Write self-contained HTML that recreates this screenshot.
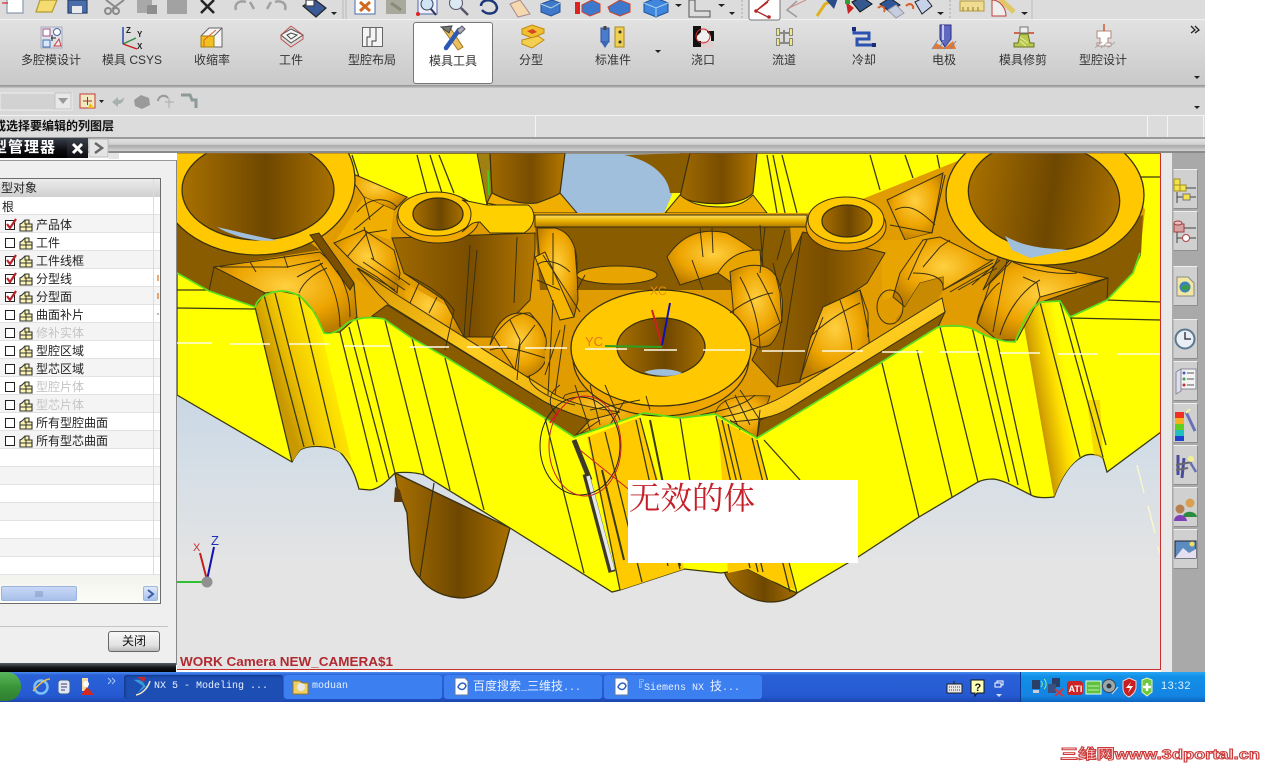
<!DOCTYPE html>
<html><head><meta charset="utf-8"><title>NX 5 Modeling</title>
<style>
html,body{margin:0;padding:0;background:#fff;width:1280px;height:768px;overflow:hidden}
body{position:relative;font-family:"Liberation Sans","Noto Sans CJK SC",sans-serif;font-size:12px;color:#222}
.a{position:absolute}
.l{position:absolute;top:52px;width:80px;text-align:center;font-size:12px;line-height:16px;color:#333;white-space:nowrap}
.r{position:absolute;left:0;width:160px;height:17px;border-bottom:1px solid #e2e2e2;background:#fff}
.r.g{background:#f4f4f4}
.t{position:absolute;left:36px;top:0;line-height:20px;font-size:12px;color:#222;white-space:nowrap}
.d{color:#c4c4c4}
.tb{position:absolute;top:675px;height:24px;border-radius:3px;background:#3c7ff0;color:#e8f0ff;font:10px/24px "Liberation Mono","Noto Sans CJK SC",monospace;white-space:nowrap;overflow:hidden}
.tb b{font-weight:normal;font-size:12px}
.sb{position:absolute;left:1173px;width:25px;background:#d0d0d0;border:1px solid #8e8e8e;border-left-color:#bbb;border-top-color:#eee;box-sizing:border-box}
</style></head><body>

<div class="a" style="left:0;top:0;width:1205px;height:20px;background:#dcdcdc;border-bottom:1px solid #f0f0f0;box-sizing:border-box"></div>
<div class="a" style="left:0;top:20px;width:1205px;height:65px;background:linear-gradient(#e2e2e2,#c9c9c9)"></div>
<div class="a" style="left:0;top:85px;width:1205px;height:3px;background:linear-gradient(#8f8f8f,#c8c8c8)"></div>
<div class="a" style="left:0;top:88px;width:1205px;height:28px;background:#d8d8d8;border-bottom:1px solid #f2f2f2;box-sizing:border-box"></div>
<div class="a" style="left:0;top:116px;width:1205px;height:21px;background:#dcdcdc"></div>
<div class="a" style="left:0;top:137px;width:1205px;height:2px;background:#9a9a9a"></div>
<div class="a" style="left:0;top:139px;width:1205px;height:12px;background:linear-gradient(#e2e2e2,#d0d0d0 45%,#aaa 55%,#d2d2d2)"></div>
<div class="a" style="left:0;top:151px;width:1205px;height:2px;background:#8a8a8a"></div>
<div class="a" style="left:535px;top:116px;width:1px;height:21px;background:#f4f4f4"></div>
<div class="a" style="left:1147px;top:116px;width:1px;height:21px;background:#f4f4f4"></div>
<div class="a" style="left:1167px;top:116px;width:1px;height:21px;background:#f4f4f4"></div>
<div class="a" style="left:1203px;top:116px;width:1px;height:21px;background:#f4f4f4"></div>

<div class="a" style="left:413px;top:22px;width:80px;height:62px;background:#fff;border:1px solid #777;border-radius:3px;box-sizing:border-box"></div>
<div class="l" style="left:11px">多腔模设计</div>
<div class="l" style="left:92px">模具 CSYS</div>
<div class="l" style="left:172px">收缩率</div>
<div class="l" style="left:251px">工件</div>
<div class="l" style="left:332px">型腔布局</div>
<div class="l" style="left:413px;top:53px">模具工具</div>
<div class="l" style="left:491px">分型</div>
<div class="l" style="left:573px">标准件</div>
<div class="l" style="left:663px">浇口</div>
<div class="l" style="left:744px">流道</div>
<div class="l" style="left:824px">冷却</div>
<div class="l" style="left:904px">电极</div>
<div class="l" style="left:983px">模具修剪</div>
<div class="l" style="left:1063px">型腔设计</div>

<div class="a" style="left:-6px;top:118px;font-size:12px;font-weight:bold;line-height:17px;color:#111;white-space:nowrap">或选择要编辑的列图层</div>

<!-- Toolbar and ribbon icons -->
<svg class="a" style="left:0;top:0" width="1205" height="116" viewBox="0 0 1205 116" fill="none">
<g stroke-width="1.2">
<path d="M7 0V13H23V0" fill="#fff" stroke="#8a9ab0"/><path d="M2 3H8" stroke="#d22"/>
<path d="M36 12L40 0H57L52 12Z" fill="#f4dc70" stroke="#b49a30"/>
<path d="M68 0H87V13H68Z" fill="#4a6ca8" stroke="#26406e"/><rect x="72" y="6" width="10" height="7" fill="#e8e8e8"/>
<path d="M106 0L118 9M124 0L112 9" stroke="#8a8a8a" stroke-width="2"/><circle cx="108" cy="11" r="3" stroke="#8a8a8a" stroke-width="2"/><circle cx="116" cy="11" r="3" stroke="#8a8a8a" stroke-width="2"/>
<rect x="137" y="0" width="15" height="13" fill="#a8a8a8"/><rect x="147" y="5" width="10" height="9" fill="#8e8e8e"/>
<rect x="167" y="0" width="20" height="14" fill="#a2a2a2"/>
<path d="M201 0L214 13M214 0L201 13" stroke="#222" stroke-width="2.5"/>
<path d="M236 10C234 3 240 0 246 2M254 9L250 2" stroke="#a0a0a0" stroke-width="2.5"/>
<path d="M285 10C287 3 281 0 275 2M267 9L271 2" stroke="#a0a0a0" stroke-width="2.5"/>
<path d="M303 6L314 -1L326 8L316 17Z" fill="#3a5a98" stroke="#222"/><path d="M306 0H314V6H306Z" fill="#fff" stroke="#444"/>
</g>
<path d="M331 12H337L334 15Z" fill="#222"/>
<path d="M343 0V19M346 0V19" stroke="#b8b8b8"/>
<g>
<rect x="355" y="-2" width="20" height="16" fill="#fff" stroke="#4a6aa8"/><path d="M360 2L370 11M370 2L360 11" stroke="#d06a20" stroke-width="3"/>
<rect x="386" y="-2" width="20" height="16" fill="#a8a89c"/><path d="M391 3L401 10" stroke="#8a8a78" stroke-width="3"/>
<rect x="418" y="-2" width="19" height="16" fill="#eef" stroke="#4a6aa8"/><circle cx="427" cy="4" r="6" stroke="#345" fill="#cfe4f4"/><path d="M431 9L436 15" stroke="#335" stroke-width="2"/><circle cx="418" cy="14" r="2" fill="#d22"/>
<circle cx="456" cy="3" r="6.5" stroke="#556" fill="#dce8f2"/><path d="M461 8L468 15" stroke="#556" stroke-width="2.5"/>
<path d="M481 6C481 -2 496 -2 497 8C496 15 486 15 482 10" stroke="#1c3878" stroke-width="2.5"/>
<path d="M510 4L520 0L530 14L518 17Z" fill="#f4d8b0" stroke="#a88"/>
<path d="M541 4L552 0L560 3V12L551 16L541 12Z" fill="#3d78cc" stroke="#26508f"/><path d="M541 4L551 8L560 3" stroke="#bdd"/>
<rect x="575" y="2" width="5" height="12" fill="#d22"/><path d="M582 5L592 0L600 4V12L590 16L582 12Z" fill="#3d78cc" stroke="#d0402c"/>
<path d="M608 7L620 0L630 4V12L620 16L610 12Z" fill="#3d78cc" stroke="#d0402c"/>
<path d="M644 3L656 -2L668 3V12L656 17L644 12Z" fill="#3f86dc" stroke="#1c4f98"/><path d="M644 3L656 8L668 3M656 8V17" stroke="#a8d0f4"/>
<path d="M675 4H682L678.500 7Z" fill="#222"/>
<path d="M689 0V17H710V11H695V0Z" fill="#dcdcdc" stroke="#555"/>
<path d="M718 4H725L721.500 7Z M729 12H735L732 15Z" fill="#222"/>
<path d="M742 0V19" stroke="#a8a8a8" stroke-dasharray="2 2"/>
<rect x="749" y="-3" width="31" height="23" rx="2" fill="#fff" stroke="#777"/><path d="M768 2L756 11L768 17M756 11L770 -1" stroke="#b02a2a" stroke-width="1.3"/><circle cx="756" cy="11" r="1.8" fill="#b22"/><circle cx="769" cy="17" r="1.8" fill="#b22"/>
<path d="M797 1L787 10L797 17" stroke="#9a9a9a" stroke-width="1.5"/><path d="M789 8L806 0" stroke="#d08a8a"/>
<path d="M817 16L825 4L835 0" stroke="#e0b020" stroke-width="3"/><path d="M826 0L838 -2L834 9Z" fill="#2a4a88"/>
<path d="M846 2L848 14L854 8Z" fill="#c82222"/><path d="M852 2L862 -3L872 4L860 12Z" fill="#35598f" stroke="#111"/><rect x="845" y="0" width="5" height="4" fill="#30a030"/>
<path d="M880 4L890 -2L900 5L890 12Z" fill="#2e5496" stroke="#222"/><path d="M888 10L896 5L904 13L896 18Z" fill="#c4cee0" stroke="#99a"/><path d="M878 8C882 4 886 8 884 12" stroke="#d8602c" stroke-width="2"/>
<path d="M906 6C910 2 914 5 913 9" stroke="#d8602c" stroke-width="2"/><path d="M915 2L925 -3L932 6L922 14Z" fill="#c6d2e8" stroke="#223"/>
<path d="M937 12H944L940.500 15Z" fill="#222"/>
<path d="M950 0V19" stroke="#a8a8a8" stroke-dasharray="2 2"/>
<rect x="960" y="1" width="24" height="10" fill="#f0dc90" stroke="#b49a40"/><path d="M963 7V11M968 7V11M973 7V11M978 7V11" stroke="#8a7630"/>
<path d="M992 0V16H1006C1006 8 1000 0 992 0Z" fill="#eee" stroke="#c04040"/><path d="M1000 -1L1014 12" stroke="#e0c868" stroke-width="5"/>
<path d="M1021 12H1028L1024.500 15Z" fill="#222"/>
<path d="M1032 0V19" stroke="#bbb"/>
</g>

<!-- ribbon -->
<g>
<rect x="41" y="27" width="21" height="21" fill="#dfe3e8" stroke="#aab" />
<rect x="43" y="29" width="7" height="7" fill="#fff" stroke="#a0508a"/><circle cx="57" cy="32" r="3.500" fill="#fff" stroke="#4a62a0"/>
<rect x="43" y="40" width="7" height="7" fill="#d8e8f8" stroke="#3a70b8"/><path d="M54 46L61 46L59 39Z" fill="#f8e8e8" stroke="#c04040"/>
<path d="M51 38H56M52 35V41" stroke="#222"/>
<path d="M123 44L136 38" stroke="#2c8c40" stroke-width="1.400"/><path d="M123 44V27" stroke="#2040a8" stroke-width="1.400"/><path d="M123 44L137 49" stroke="#c82020" stroke-width="1.400"/>
<text x="126" y="33" font-size="8" font-weight="bold" fill="#222">Z</text><text x="137" y="37" font-size="8" font-weight="bold" fill="#222">Y</text><text x="137" y="49" font-size="8" font-weight="bold" fill="#222">X</text>
<path d="M201 36L209 28H222V47H201Z" fill="#f6f6f6" stroke="#666"/><path d="M201 36H214V47H201Z" fill="#f0c020" stroke="#a08010"/><path d="M214 36L222 28" stroke="#666"/><path d="M204 47V40L216 30" stroke="#e06020"/>
<path d="M281 35L291 29L303 35L291 43Z" fill="#f4f4f4" stroke="#555"/><path d="M281 35V39L291 47L303 39V35M291 26L281 35M291 26L303 35" stroke="#c05050"/><path d="M287 35L291 33L297 35L291 39Z" stroke="#444"/>
<rect x="362.500" y="27.500" width="20" height="19" fill="#f4f4f4" stroke="#666"/>
<path d="M370 28V37H367V46M376 28V41H372V46" stroke="#444"/>
<!-- hammer -->
<path d="M443 29L449 26L463 47L458 50Z" fill="#e8c060" stroke="#a07820"/>
<path d="M441 27L452 26L449 33Z" fill="#777" stroke="#444"/>
<path d="M459 30L446 48" stroke="#2c58b4" stroke-width="4.500" stroke-linecap="round"/><path d="M457 30L462 26L465 29L460 34Z" fill="#aab" stroke="#556"/>
<!-- parting -->
<path d="M522 29L532 25L544 29V33L532 38L522 34Z" fill="#f0c030" stroke="#c08810"/><path d="M527 31L533 29L537 32L532 34Z" fill="#d84820"/>
<path d="M522 40L538 36L544 40L532 48L522 44Z" fill="#f4d050" stroke="#c08810"/>
<!-- standard parts -->
<rect x="601" y="28" width="8" height="14" fill="#4a7ccc" stroke="#2a4f98"/><path d="M601 42L605 48L609 42Z" fill="#3a66b4"/><path d="M605 26V30" stroke="#444" stroke-width="3"/>
<rect x="615" y="27" width="9" height="20" fill="#f0d050" stroke="#a88820"/><circle cx="620" cy="32" r="1.500" fill="#333"/><circle cx="620" cy="42" r="1.500" fill="#333"/>
<path d="M655 50L658 53L661 50Z" fill="#222"/>
<!-- gate -->
<rect x="693" y="26" width="21" height="21" fill="#111"/><path d="M701 26H707V32L711 36V41H697V36L701 32Z" fill="#f0f0f0"/><rect x="701" y="41" width="13" height="7" fill="#e0d0d0"/><rect x="701" y="26" width="13" height="5" fill="#ddd"/><circle cx="703" cy="36" r="7" stroke="#d02828"/>
<!-- runner -->
<rect x="776.500" y="28.500" width="3" height="7" fill="#f0e890" stroke="#887"/><rect x="789.500" y="28.500" width="3" height="7" fill="#f0e890" stroke="#887"/><rect x="776.500" y="38.500" width="3" height="7" fill="#f0e890" stroke="#887"/><rect x="789.500" y="38.500" width="3" height="7" fill="#f0e890" stroke="#887"/>
<path d="M779 33H790M784 30V43M779 43H790" stroke="#888" stroke-width="2"/>
<!-- cooling -->
<path d="M854 29V33H869V39H857V45H874" stroke="#2a52b0" stroke-width="3"/><rect x="852" y="27" width="4" height="4" fill="#182c78"/><rect x="872" y="43" width="4" height="4" fill="#182c78"/>
<!-- electrode -->
<path d="M940 25H951V39L945 47L940 39Z" fill="#6068c0" stroke="#2a2a80"/><path d="M943 25V40" stroke="#c0c8f0" stroke-width="2"/>
<path d="M932 49H956L953 41L945 48L936 43Z" fill="#e87830"/><path d="M932 49L938 40M938 49L944 41M944 49L950 41M950 49L956 41" stroke="#7888a8"/>
<!-- trim -->
<path d="M1014 33H1034" stroke="#c84020" stroke-width="1.500"/><rect x="1020" y="27" width="8" height="6" fill="#eee" stroke="#777"/>
<path d="M1020 34H1028L1030 43H1034V47H1014V43H1018Z" fill="#b8c850" stroke="#6a7820"/><path d="M1020 37L1028 43M1020 41L1026 46" stroke="#e8f0a0"/>
<!-- cavity -->
<path d="M1097 31H1111V38H1108V43H1111V46H1097V43H1100V38H1097Z" fill="#fff" stroke="#b08878"/><path d="M1104 24V31" stroke="#d05a30" stroke-width="1.500"/><path d="M1095 48L1102 42M1101 48L1108 42M1108 48L1115 42" stroke="#aaa"/>
<path d="M1191 26L1195 30L1191 33M1195 26L1199 30L1195 33" stroke="#222" stroke-width="1.300"/>
<path d="M1194 76H1200L1197 79Z" fill="#222"/>
</g>

<!-- second row -->
<rect x="0" y="93" width="72" height="17" fill="#d2d2d2" stroke="#eee"/>
<rect x="55" y="93" width="16" height="16" fill="#e8e8e8" stroke="#c4c4c4"/><path d="M58 98H68L63 104Z" fill="#999"/>
<rect x="80" y="94" width="15" height="14" fill="#f0e8c0" stroke="#c83a3a"/><path d="M83 101H92M87.500 97V105" stroke="#a03030"/><path d="M90 103L94 108L88 108Z" fill="#e8c020"/>
<path d="M99 100H104L101.500 103Z" fill="#222"/>
<path d="M112 102L118 107V104C122 104 124 101 124 97C122 100 120 100 118 100V97Z" fill="#a8b0b0"/>
<path d="M134 100L141 95L149 98L150 105L142 109L135 106Z" fill="#9a9a9a"/>
<path d="M158 101C158 96 165 94 168 98" stroke="#999" stroke-width="2"/><path d="M165 102H174M169 98V108" stroke="#aaa"/>
<path d="M181 95H190L192 100H196V108" stroke="#8e9a9a" stroke-width="3"/>
<path d="M1194 106H1200L1197 109Z" fill="#222"/>
</svg>

<!-- Model viewport -->
<svg class="a" style="left:177px;top:153px" width="984" height="517" viewBox="177 153 984 517">
<defs>
<linearGradient id="bg" x1="0" y1="0" x2="0" y2="1"><stop offset="0" stop-color="#9dbcdc"/><stop offset=".58" stop-color="#d3dde6"/><stop offset=".8" stop-color="#e4e4e4"/><stop offset="1" stop-color="#e4e4e4"/></linearGradient>
<linearGradient id="br" x1="0" y1="0" x2="1" y2="0"><stop offset="0" stop-color="#a87000"/><stop offset=".55" stop-color="#6e4700"/><stop offset="1" stop-color="#a87000"/></linearGradient>
<linearGradient id="br2" x1="0" y1="0" x2="1" y2="0"><stop offset="0" stop-color="#a06a00"/><stop offset=".55" stop-color="#784d00"/><stop offset="1" stop-color="#b47800"/></linearGradient>
<linearGradient id="col" gradientUnits="userSpaceOnUse" x1="262" y1="340" x2="330" y2="318"><stop offset="0" stop-color="#c89800"/><stop offset=".35" stop-color="#f2c800"/><stop offset=".75" stop-color="#ffe800"/><stop offset="1" stop-color="#ffff00"/></linearGradient>
<linearGradient id="col2" gradientUnits="userSpaceOnUse" x1="1028" y1="392" x2="1068" y2="385"><stop offset="0" stop-color="#a87c00"/><stop offset=".3" stop-color="#d8a800"/><stop offset=".7" stop-color="#ffe000"/><stop offset="1" stop-color="#ffff00"/></linearGradient>
<radialGradient id="sh" cx=".5" cy=".42" r=".62"><stop offset="0" stop-color="#ffd040"/><stop offset=".6" stop-color="#eda400"/><stop offset="1" stop-color="#b87a00"/></radialGradient>
<linearGradient id="rim" x1="0" y1="0" x2="1" y2="1"><stop offset="0" stop-color="#d89400"/><stop offset=".5" stop-color="#ffce20"/><stop offset="1" stop-color="#e0a000"/></linearGradient>
<linearGradient id="bar" x1="0" y1="0" x2="0" y2="1"><stop offset="0" stop-color="#ffe060"/><stop offset=".5" stop-color="#e8b000"/><stop offset="1" stop-color="#b07a00"/></linearGradient>
</defs>
<rect x="177" y="153" width="984" height="517" fill="url(#bg)"/>

<!-- rear cylinders below body -->
<path d="M395,473 L510,528 L497,577 C492,590 480,596 464,598 C445,598 428,590 420,578 C412,570 410,560 410,557 L407,513 L397,487Z" fill="url(#br)" stroke="#3a3010" stroke-width="1.300"/>
<path d="M395,487L394,502H403L400,490Z" fill="#5a3a10"/>
<path d="M434,483L420,577" stroke="#3a3010" stroke-width="1.200"/>
<path d="M724,570C728,588 750,602 771,602C782,602 792,598 797,593L750,565Z" fill="url(#br)" stroke="#3a3010" stroke-width="1.300"/>

<!-- yellow body -->
<path d="M177,153L1161,153V432L1107,472L1103,458C1098,454 1088,453 1082,457C1072,462 1062,475 1054,497C1045,498 1038,498 1033,496C1020,490 1005,480 993,479C985,479 980,481 978,482L919,517L858,557L797,593L790,590L748,569L721,573L684,569L620,590L612,592L510,528L424,475C415,472 403,472 395,473C388,480 380,489 370,490L359,489C356,478 352,465 340,452C330,446 310,444 300,450C296,455 293,460 292,462L177,395Z" fill="#ffff00" stroke="#3a3a10" stroke-width="1.300"/>

<!-- orange faces -->
<path d="M587,437L640,417L684,569L620,590Z" fill="#ffca00"/>
<path d="M718,418L757,440L795,590L770,580L748,569L728,573Z" fill="#ffca00"/>

<!-- columns -->
<path d="M255,307L265,293C272,290 290,290 299,295C310,305 316,315 320,325L352,463C346,455 340,452 332,448C320,444 305,446 300,450L292,462Z" fill="url(#col)"/>
<path d="M1023,320C1028,312 1034,304 1042,302L1060,301L1070,318L1082,456C1070,464 1062,476 1054,497Z" fill="url(#col2)"/>
<path d="M1087,400L1100,400L1103,458L1094,455Z" fill="#f0c000" opacity=".6"/>

<!-- thin dark lines on yellow -->
<g stroke="#3a3a10" stroke-width="1.300" fill="none">
<path d="M255,307L292,462M264,295L304,447M275,293L314,445M299,297L335,448M340,332L377,482M349,327L389,478M357,320L395,473M385,320L424,475M412,338L450,490M445,358L484,510M545,418L584,573"/>
<path d="M589,437L620,590M605,432L642,582M636,420L668,566M640,418L680,569M680,418L703,563M716,416L750,568M722,420L758,572M728,424L763,572M752,438L790,592M757,440L797,593M764,440L800,480"/>
<path d="M882,363L919,517M917,350L952,497M940,327L978,482M972,327L1009,482M982,330L1018,485M997,340L1031,495M1040,302L1080,457M1060,302L1103,457M1066,300L1106,445"/>
<path d="M352,155L359,177M417,155L427,193M430,155L442,193M439,155L454,193M767,155L777,213M773,155L785,213M782,155L797,213M870,155L880,190M905,155L913,178M937,155L940,170"/>
<path d="M1133,177H1161M1107,300L1161,302M1070,318L1161,320M177,290H209M177,308L255,309"/>
</g>
<path d="M574,440L590,480" stroke="#3e3a2a" stroke-width="5"/>
<path d="M586,474L612,572" stroke="#3e3a2a" stroke-width="7"/>
<path d="M588,476L613,570" stroke="#e4e8ee" stroke-width="3.500"/>
<path d="M602,470L624,560" stroke="#3a3a10" stroke-width="2"/>
<path d="M650,420L680,566" stroke="#3a3a10" stroke-width="2"/>

<!-- blue hole + rear pillars -->
<path d="M563,153H680L672,195L664,213H577L560,195Z" fill="#a0bfdc"/>
<path d="M477,153H490L492,193L487,205Z" fill="#a08010" stroke="#3a3010"/>
<path d="M488,170L489,195" stroke="#40d020" stroke-width="1.500"/>
<path d="M490,153L492,193C505,200 520,205 537,203C545,200 555,197 560,193L565,153Z" fill="url(#br2)" stroke="#3a3010" stroke-width="1.200"/>
<path d="M624,155C650,160 668,175 670,193L684,193L690,153Z" fill="#8a5c00"/>
<path d="M690,153L680,197C695,205 740,208 753,193L757,153Z" fill="url(#br2)" stroke="#3a3010" stroke-width="1.200"/>
<path d="M665,213L680,195C690,203 700,207 722,207C735,207 745,203 753,195L767,213Z" fill="#f0ae00" stroke="#3a3010"/>
<path d="M487,203L492,193C505,200 520,205 537,203C545,200 555,197 560,193L577,213H535Z" fill="#f0ae00" stroke="#3a3010"/>

<!-- pocket -->
<path d="M177,273L209,291L255,307L265,293L280,291L299,295L315,313L324,333L340,330L357,318L384,319L410,337L447,358L545,418L574,437L644,413L680,418L715,414L757,438L880,363L938,327L970,327L997,340L1015,342L1023,320L1042,302L1060,301L1070,317L1107,300L1133,273L1140,253L1145,210L1120,160H960L860,200L807,213H535L407,197L344,170L300,200L177,225Z" fill="#e09c00"/>
<path d="M535,225H790L795,290H540Z" fill="#8a5c00"/>
<path d="M177,225V273L209,291L214,267L320,250L300,235L177,205Z" fill="#8a5c00"/>
<path d="M1143,215L1141,255L1133,273L1107,300L1108,278L1013,260L1060,245Z" fill="#8a5c00"/>
<path d="M214,267L209,291L255,307L265,293L280,290L297,293Z" fill="#8a5c00" stroke="#3a3010"/>
<path d="M1108,278L1107,300L1070,317L1060,301L1042,302Z" fill="#8a5c00" stroke="#3a3010"/>

<!-- left fans -->
<path d="M214,267L320,252L354,283L357,317L340,332L324,333L315,313L299,295L280,291L265,293Z" fill="url(#sh)" stroke="#3a3010"/>
<path d="M354,277L390,303L372,316L357,317Z" fill="#e8a400"/>
<path d="M344,170L407,197L394,210L364,197L354,183Z" fill="url(#sh)" stroke="#3a3010"/>
<path d="M354,213L364,197L394,210L390,240L364,230L334,243Z" fill="#f0ae00"/>
<path d="M334,243L364,230L394,250L400,273L397,293L377,277L354,263Z" fill="url(#sh)" stroke="#3a3010"/>
<path d="M394,277L454,310L462,340L450,345L404,296Z" fill="url(#sh)"/>

<!-- right fans -->
<path d="M1013,260L1108,278L1040,297L1017,340L997,340L977,323L990,283Z" fill="url(#sh)" stroke="#3a3010"/>
<path d="M887,200L943,173L932,233L905,240Z" fill="url(#sh)" stroke="#3a3010"/>
<path d="M880,240L905,240L932,233L925,240L900,273L893,297L883,300Z" fill="#e8a400"/>
<path d="M900,273L923,240L940,237L987,260L993,260L943,290L943,277L920,283L905,307L893,297Z" fill="url(#sh)" stroke="#3a3010"/>
<path d="M905,307L920,283L943,277L943,290L935,305L908,325L895,320Z" fill="#c88a00"/>
<path d="M1000,253L1007,247L1010,260L983,290Z" fill="#a87000" stroke="#3a3010"/>

<!-- bosses bodies -->
<path d="M392,238L535,233V250L530,300L494,337L464,337L444,300L404,273Z" fill="url(#br2)" stroke="#3a3010"/>
<path d="M803,232L885,253L867,283L827,310L810,345L800,382L777,387L752,360L770,320L785,270Z" fill="url(#br2)" stroke="#3a3010"/>

<!-- central fillets -->
<path d="M490,345C495,325 505,313 520,313C540,315 548,335 547,355C545,370 530,378 520,378L494,337Z" fill="url(#sh)" stroke="#3a3010"/>
<path d="M537,228H555C572,232 578,250 577,270L578,300L574,317H560L540,262Z" fill="url(#sh)" stroke="#3a3010"/>
<path d="M535,257L560,320L574,317L545,252Z" fill="#f5b400" stroke="#3a3010"/>
<path d="M545,330L575,320L572,395L545,400Z" fill="#e09c00"/>
<ellipse cx="617" cy="275" rx="40" ry="9" fill="#e8a400" stroke="#3a3010"/>
<path d="M667,257C683,233 703,228 727,233C740,240 755,250 760,255L718,273L680,285Z" fill="url(#sh)" stroke="#3a3010"/>
<path d="M718,273C730,253 747,250 760,250L762,280L735,285Z" fill="#e8a400" stroke="#3a3010"/>
<path d="M730,272C750,262 770,262 778,280C785,300 785,330 770,345C755,352 745,340 735,330Z" fill="url(#sh)" stroke="#3a3010"/>
<path d="M823,307L860,290L868,330L870,350L800,380L810,340Z" fill="url(#sh)" stroke="#3a3010"/>

<!-- corner fillets at V -->
<path d="M565,395C590,385 630,395 645,413L600,428L575,435L555,412Z" fill="url(#sh)" stroke="#3a3010" stroke-width=".8"/>
<path d="M715,414C720,395 745,395 770,396L760,425L757,438Z" fill="url(#sh)" stroke="#3a3010" stroke-width=".8"/>

<!-- rims and walls -->
<path d="M387,305L545,402L590,420L574,437L545,418L447,358L410,337L384,319L372,316Z" fill="#8a5c00" stroke="#3a3010"/>
<path d="M760,420L790,408L945,312L938,327L880,363L757,438Z" fill="#8a5c00" stroke="#3a3010"/>
<path d="M357,268L394,293L551,392C565,402 590,408 620,412L590,420C575,415 560,410 545,402L389,305L378,294Z" fill="url(#rim)" stroke="#3a3010"/>
<path d="M722,417C740,414 770,405 787,394L942,298L945,312L790,408C770,420 750,420 730,422Z" fill="url(#rim)" stroke="#3a3010"/>
<path d="M535,215H807V227H535Z" fill="url(#bar)" stroke="#3a3010"/>

<!-- left ring -->
<ellipse cx="257" cy="180" rx="98" ry="75" fill="#ffc800" stroke="#3a3010" stroke-width="1.300"/>
<ellipse cx="258" cy="190" rx="76" ry="50" fill="url(#br)" stroke="#3a3010" stroke-width="1.300"/>
<path d="M217,227C240,232 262,238 277,240C262,243 235,238 217,227Z" fill="#a0bfdc"/>
<path d="M310,235L319,233L354,283L350,290Z" fill="#7a5000" stroke="#3a3010"/>

<!-- right ring -->
<ellipse cx="1045" cy="195" rx="99" ry="70" fill="#ffc800" stroke="#3a3010" stroke-width="1.300"/>
<ellipse cx="1044" cy="196" rx="76" ry="54" fill="url(#br)" stroke="#3a3010" stroke-width="1.300" transform="rotate(8 1044 196)"/>
<path d="M1005,236C1030,250 1055,248 1068,250L1030,258L1012,250Z" fill="#a0bfdc"/>

<!-- left boss -->
<ellipse cx="438" cy="218" rx="41" ry="25" fill="#f0a800" stroke="#3a3010"/>
<ellipse cx="436" cy="214" rx="38" ry="22" fill="#ffc800" stroke="#3a3010"/>
<ellipse cx="438" cy="214" rx="25" ry="16" fill="url(#br)" stroke="#3a3010" stroke-width="1.300"/>
<path d="M462,200L487,205H528C536,210 537,225 524,233H490L480,222C470,222 470,226 462,232C474,222 474,205 462,200Z" fill="#ffd000" stroke="#3a3010"/>

<!-- right boss -->
<ellipse cx="846" cy="226" rx="40" ry="25" fill="#f0a800" stroke="#3a3010"/>
<ellipse cx="846" cy="220" rx="38" ry="23" fill="#ffc800" stroke="#3a3010"/>
<ellipse cx="847" cy="221" rx="25" ry="16" fill="url(#br)" stroke="#3a3010" stroke-width="1.300"/>

<!-- central ring -->
<ellipse cx="661" cy="358" rx="88" ry="58" fill="#f0a800" stroke="#3a3010" stroke-width="1.200"/>
<ellipse cx="661" cy="348" rx="90" ry="58" fill="#ffc800" stroke="#3a3010" stroke-width="1.300"/>
<ellipse cx="661" cy="347" rx="44" ry="29" fill="url(#br)" stroke="#3a3010" stroke-width="1.300"/>
<path d="M644,372C655,377 675,377 682,373C672,368 655,368 644,372Z" fill="#a0bfdc"/>

<!-- mesh lines -->
<g stroke="#3a3010" stroke-width="1" fill="none">
<path d="M220,267H254L287,267L320,260M250,262L256,272M284,256L288,268M297,277L323,263M299,293C304,280 317,272 327,268M340,327C340,307 334,283 320,263M350,317C350,300 347,287 337,270M357,318L354,283"/>
<path d="M364,197L370,220M357,212C373,193 390,200 397,207M354,230L384,205M347,257L367,233L387,230M364,227L374,260M358,268L395,290M363,262L405,290M371,258L410,285"/>
<path d="M419,283L410,303M437,297L429,313M454,310L445,350M404,273C420,282 440,290 454,310"/>
<path d="M470,245L464,337M477,250L469,337M517,237L514,303"/>
<path d="M494,337C505,320 518,312 530,313M510,320L520,340L515,370M530,313C540,325 550,335 545,350M535,325L520,345L517,380M490,350C505,345 520,350 545,358M560,330L545,375M553,300L548,395M565,325L555,395"/>
<path d="M543,255L580,312M553,233V285M537,265C545,258 560,262 570,272M537,280L560,290M575,250L577,275M577,290L585,275"/>
<path d="M700,228L703,257M712,228L713,253M692,260L703,290M760,225L763,267M765,227L760,273"/>
<path d="M730,313C750,297 770,293 773,293M740,277C753,300 760,327 760,350M757,273C773,300 780,323 780,323M773,263L780,293L782,323M753,340L780,323M785,230L777,260"/>
<path d="M802,233L777,387M823,317L810,350L800,380M840,300C850,327 852,350 852,350M860,290L868,313V337M810,337C827,320 845,310 860,303"/>
<ellipse cx="890" cy="307" rx="13" ry="17"/>
<path d="M908,280L920,253L927,240M923,267L940,247L950,240M913,273C930,273 945,277 943,290M943,290L993,263M950,292L995,266M958,290L997,268M972,285L1000,260"/>
<path d="M977,323C980,300 997,283 1000,283M993,332C1000,293 1007,260 1007,260M1000,335C1013,293 1040,280 1040,280M1013,262C1047,277 1077,273 1077,273M1040,297L1037,283L1023,277"/>
<path d="M895,210C905,205 915,205 935,225M890,225L932,233M945,175L932,233"/>
<path d="M740,390L760,420M735,395L750,425M725,400L740,430M700,415C725,410 745,405 755,395M760,410L757,438M730,420L757,438"/>
<path d="M590,410L640,400M650,410L646,396M600,420L575,437M625,400L610,425M575,385L590,430M590,385L600,425M605,385L620,420"/>
<path d="M560,385C545,395 550,410 558,415M530,375C525,385 550,400 575,405"/>
</g>

<!-- green edge -->
<path d="M177,273L209,291L255,307C258,298 265,293 280,291C292,291 300,295 306,302C316,312 320,325 324,333C332,335 340,330 345,325C352,318 370,316 384,319L410,337L447,358L545,418L574,437L644,413L680,418L715,414L757,438L880,363L938,327C950,325 965,325 975,330C985,336 1000,342 1015,342C1022,325 1030,305 1042,302L1060,301L1070,317L1107,300L1133,273L1140,253" fill="none" stroke="#58e020" stroke-width="1.700"/>

<!-- dashed line -->
<path d="M177,343H212M230,344H270M289,344H329M344,346H390M409,347H449M467,347H507M525,348H567M585,349H627M644,350H677M703,350H745M762,351H805M822,351H863M882,352H923M940,352H980M1000,353H1040M1058,354H1098M1117,354H1160" stroke="#fffbe6" stroke-width="1.600" fill="none"/>
<path d="M1137,465L1144,493M1148,506L1155,533M1158,547L1160,553" stroke="#fff8c8" stroke-width="1.300" fill="none"/>

<!-- WCS at center -->
<path d="M605,346L662,347" stroke="#2ca020" stroke-width="2"/>
<path d="M652,310L662,345" stroke="#d02020" stroke-width="2"/>
<path d="M670,303L662,345" stroke="#1010b0" stroke-width="2"/>
<text x="585" y="346" font-family="Liberation Sans" font-size="13" fill="#e07820">YC</text>
<text x="650" y="295" font-family="Liberation Sans" font-size="12" fill="#e09010">XC</text>

<!-- annotation -->
<ellipse cx="580" cy="446" rx="40" ry="49" fill="none" stroke="#222" stroke-width="1"/>
<ellipse cx="585" cy="446" rx="36" ry="50" fill="none" stroke="#c82020" stroke-width="1"/>
<path d="M580,450L632,492" stroke="#d02020" stroke-width="1"/>
<path d="M550,423L559,410" stroke="#d02020" stroke-width="1.500"/>
<rect x="628" y="480" width="230" height="83" fill="#fff"/>
<text x="629" y="509" font-family="Liberation Serif,Noto Serif CJK SC,serif" font-size="31.500" fill="#c4202a">无效的体</text>

<!-- triad -->
<path d="M177,582H207" stroke="#30c030" stroke-width="2"/>
<path d="M200,553L207,580" stroke="#c02020" stroke-width="2"/>
<path d="M214,547L207,580" stroke="#1010b0" stroke-width="2"/>
<circle cx="207" cy="582" r="5.500" fill="#909090"/>
<text x="193" y="551" font-family="Liberation Sans" font-size="11" fill="#c83030">X</text>
<text x="211" y="545" font-family="Liberation Sans" font-size="13" fill="#2030b0">Z</text>

<text x="180" y="666" font-family="Liberation Sans" font-weight="bold" font-size="13" fill="#b02a30" textLength="213" lengthAdjust="spacingAndGlyphs">WORK Camera NEW_CAMERA$1</text>
<path d="M177,669.500H1160.500V153" fill="none" stroke="#c83030" stroke-width="1"/>
<path d="M177,153.500H1161" stroke="#9a6a30" stroke-width="1" opacity=".5"/>
</svg>

<!-- Right column -->
<div class="a" style="left:1161px;top:153px;width:11px;height:519px;background:#e8e8e8"></div>
<div class="a" style="left:1172px;top:153px;width:33px;height:519px;background:#a9a9a9"></div>
<div class="sb" style="top:169px;height:40px"></div>
<div class="sb" style="top:211px;height:40px"></div>
<div class="sb" style="top:266px;height:40px"></div>
<div class="sb" style="top:319px;height:40px"></div>
<div class="sb" style="top:361px;height:40px"></div>
<div class="sb" style="top:403px;height:40px"></div>
<div class="sb" style="top:445px;height:40px"></div>
<div class="sb" style="top:487px;height:40px"></div>
<div class="sb" style="top:529px;height:40px"></div>
<svg class="a" style="left:1172px;top:153px" width="33" height="420" viewBox="1172 153 33 420" fill="none">
<rect x="1174" y="179" width="6" height="6" fill="#f4e24a" stroke="#a09020"/><rect x="1180" y="185" width="6" height="6" fill="#f4e24a" stroke="#a09020"/><rect x="1174" y="185" width="6" height="6" fill="#f4e24a" stroke="#a09020"/>
<path d="M1186 188H1196M1177 192V203M1177 197H1183M1190 197H1196" stroke="#444"/><rect x="1183" y="194" width="7" height="6" fill="#f4e24a" stroke="#777"/>
<path d="M1174 224H1184V232H1174Z" fill="#d8a0a0" stroke="#a04040"/><ellipse cx="1178" cy="223" rx="4" ry="2" fill="#e8c0c0" stroke="#a04040"/>
<path d="M1184 228H1196M1177 232V243M1177 238H1183M1190 238H1196" stroke="#444"/><circle cx="1186" cy="238" r="3.500" fill="#fff" stroke="#b04040"/>
<path d="M1177 277H1188L1194 283V296H1177Z" fill="#f2e6a4" stroke="#8a8a80"/><circle cx="1185" cy="287" r="5.500" fill="#3d82b8"/><path d="M1181 288C1183 284 1187 284 1190 287C1188 291 1184 292 1181 288Z" fill="#3c9a4c"/>
<circle cx="1185" cy="339" r="9.500" fill="#e8eef4" stroke="#5a7890" stroke-width="2"/><path d="M1185 332V339H1191" stroke="#223" stroke-width="1.300"/>
<path d="M1176 372L1181 369V391L1176 394Z" fill="#dde" stroke="#889"/><rect x="1181" y="369" width="15" height="20" fill="#f4f4f4" stroke="#889"/>
<circle cx="1184" cy="373" r="1.500" fill="#4060b0"/><circle cx="1184" cy="379" r="1.500" fill="#40a050"/><circle cx="1184" cy="385" r="1.500" fill="#c03030"/><path d="M1187 373H1194M1187 379H1194M1187 385H1194" stroke="#555"/>
<rect x="1175" y="412" width="9" height="6" fill="#f03020"/><rect x="1175" y="418" width="9" height="6" fill="#f8b020"/><rect x="1175" y="424" width="9" height="6" fill="#60d020"/><rect x="1175" y="430" width="9" height="6" fill="#20c0c0"/><rect x="1175" y="436" width="9" height="5" fill="#2040d0"/>
<path d="M1186 412L1195 431" stroke="#6a70b8" stroke-width="3"/><path d="M1186 413L1190 409" stroke="#f4f0a0" stroke-width="2"/>
<path d="M1178 455L1178 475M1184 458L1182 478" stroke="#4a4ca0" stroke-width="3"/><path d="M1176 465L1192 462M1176 470L1188 468" stroke="#6a6a6a" stroke-width="2"/><path d="M1190 462L1196 472" stroke="#6a70b8" stroke-width="2.500"/><circle cx="1191" cy="459" r="3" fill="#f0f090"/>
<circle cx="1190" cy="503" r="4.500" fill="#d8a050"/><path d="M1183 517C1183 510 1196 510 1197 517Z" fill="#2a8a40"/>
<circle cx="1180" cy="509" r="4.500" fill="#b88050"/><path d="M1174 521C1174 513 1186 513 1187 521Z" fill="#8040b8"/>
<rect x="1175" y="541" width="21" height="17" fill="#5a8cc0" stroke="#223"/><path d="M1175 558L1183 548L1189 553L1196 549V558Z" fill="#e4e0f0"/><circle cx="1192" cy="544" r="2.500" fill="#f0e060"/>
</svg>

<!-- Left panel -->
<div class="a" style="left:0;top:160px;width:176px;height:504px;background:#efefef;border-right:1px solid #888;border-top:1px solid #999;box-sizing:content-box"></div>
<div class="a" style="left:0;top:138px;width:67px;height:20px;background:linear-gradient(#39404a,#0c0c10 60%,#000);color:#fff;font-weight:bold;font-size:15px;line-height:19px;letter-spacing:1px;white-space:nowrap;overflow:hidden"><span style="margin-left:-8px">型管理器</span></div>
<div class="a" style="left:67px;top:138px;width:21px;height:20px;background:linear-gradient(#39404a,#0c0c10)"></div>
<svg class="a" style="left:67px;top:138px" width="42" height="20" fill="none"><path d="M6 6L15 15M15 6L6 15" stroke="#fff" stroke-width="3"/><rect x="22" y="1" width="19" height="18" fill="#e4e4e4" stroke="#bbb"/><path d="M28 5L35 10L28 15" stroke="#666" stroke-width="2.500"/></svg>
<div class="a" style="left:109px;top:153px;width:10px;height:6px;background:#e4e4e4"></div>

<div class="a" style="left:0;top:178px;width:160px;height:424px;background:#fff;border:1px solid #6c6c6c;border-left:0;overflow:hidden;box-sizing:content-box">
<div class="a" style="left:0;top:0;width:160px;height:18px;background:linear-gradient(#ececec,#cfcfcf);font-size:12px;line-height:18px;color:#222;white-space:nowrap;padding-left:1px;box-sizing:border-box">型对象</div>
<div class="r" style="top:18px"><span class="t" style="left:2px">根</span></div>
<div class="r g" style="top:36px"><span class="t">产品体</span></div>
<div class="r" style="top:54px"><span class="t">工件</span></div>
<div class="r g" style="top:72px"><span class="t">工件线框</span></div>
<div class="r" style="top:90px"><span class="t">分型线</span></div>
<div class="r g" style="top:108px"><span class="t">分型面</span></div>
<div class="r" style="top:126px"><span class="t">曲面补片</span></div>
<div class="r g" style="top:144px"><span class="t d">修补实体</span></div>
<div class="r" style="top:162px"><span class="t">型腔区域</span></div>
<div class="r g" style="top:180px"><span class="t">型芯区域</span></div>
<div class="r" style="top:198px"><span class="t d">型腔片体</span></div>
<div class="r g" style="top:216px"><span class="t d">型芯片体</span></div>
<div class="r" style="top:234px"><span class="t">所有型腔曲面</span></div>
<div class="r g" style="top:252px"><span class="t">所有型芯曲面</span></div>
<div class="r" style="top:270px"></div>
<div class="r g" style="top:288px"></div>
<div class="r" style="top:306px"></div>
<div class="r g" style="top:324px"></div>
<div class="r" style="top:342px"></div>
<div class="r g" style="top:360px"></div>
<div class="r" style="top:378px"></div>
<div class="a" style="left:153px;top:0;width:1px;height:396px;background:#dcdcdc"></div>
<div class="a" style="left:0;top:396px;width:160px;height:28px;background:linear-gradient(#f2f2ee,#fdfdf8)"></div>
<div class="a" style="left:1px;top:407px;width:76px;height:15px;background:linear-gradient(#c8d8f6,#a8c0ea);border:1px solid #9cb4dc;border-radius:2px;box-sizing:border-box"></div>
<div class="a" style="left:143px;top:407px;width:15px;height:15px;background:linear-gradient(#dfe8fa,#a8c0ea);border:1px solid #a0b6dc;border-radius:2px;box-sizing:border-box"></div>
<svg class="a" style="left:0;top:0" width="160" height="424" fill="none">
<path d="M36 412V418M38 412V418M40 412V418M42 412V418" stroke="#7f96c0"/>
<path d="M148 411L153 415L148 419" stroke="#3a5fa8" stroke-width="2"/>
<defs><g id="ic"><path d="M3 5L6 2H10V6L13 6V13H1V6Z" fill="#fbf4b0" stroke="#333" stroke-width="1.100"/><path d="M1 9H13M7 6V13M6 2V6H13" stroke="#333"/></g></defs>
<g stroke="#222" stroke-width="1" fill="#fff">
<rect x="5.500" y="41.500" width="9" height="9"/><rect x="5.500" y="59.500" width="9" height="9"/><rect x="5.500" y="77.500" width="9" height="9"/><rect x="5.500" y="95.500" width="9" height="9"/><rect x="5.500" y="113.500" width="9" height="9"/><rect x="5.500" y="131.500" width="9" height="9"/><rect x="5.500" y="149.500" width="9" height="9"/><rect x="5.500" y="167.500" width="9" height="9"/><rect x="5.500" y="185.500" width="9" height="9"/><rect x="5.500" y="203.500" width="9" height="9"/><rect x="5.500" y="221.500" width="9" height="9"/><rect x="5.500" y="239.500" width="9" height="9"/><rect x="5.500" y="257.500" width="9" height="9"/>
</g>
<g stroke="#b8222a" stroke-width="2.200"><path d="M7 45L10 49L16 40M7 81L10 85L16 76M7 99L10 103L16 94M7 117L10 121L16 112"/></g>
<use href="#ic" x="19" y="39"/><use href="#ic" x="19" y="57"/><use href="#ic" x="19" y="75"/><use href="#ic" x="19" y="93"/><use href="#ic" x="19" y="111"/><use href="#ic" x="19" y="129"/><use href="#ic" x="19" y="147"/><use href="#ic" x="19" y="165"/><use href="#ic" x="19" y="183"/><use href="#ic" x="19" y="201"/><use href="#ic" x="19" y="219"/><use href="#ic" x="19" y="237"/><use href="#ic" x="19" y="255"/>
<path d="M158 96V102M158 114V120" stroke="#d89050" stroke-width="1.500"/><path d="M158 134V136" stroke="#777"/>
</svg>
</div>
<div class="a" style="left:0;top:626px;width:168px;height:1px;background:#c4c4c4"></div>
<div class="a" style="left:108px;top:631px;width:52px;height:21px;border:1px solid #666;border-radius:3px;background:linear-gradient(#f8f8f8,#e2e2e2 70%,#bbb);box-sizing:border-box;text-align:center;font-size:12px;line-height:19px;color:#111">关闭</div>
<div class="a" style="left:0;top:663px;width:176px;height:9px;background:linear-gradient(#5a6068,#14161c 50%,#000)"></div>

<!-- Taskbar -->
<div class="a" style="left:0;top:672px;width:1205px;height:30px;background:linear-gradient(#4b8df0 0,#2b62d8 10%,#2559d2 80%,#1b46ac 100%)"></div>
<div class="a" style="left:-20px;top:672px;width:41px;height:29px;border-radius:0 14px 14px 0;background:linear-gradient(#5ab85a,#3a963a 50%,#2f7e2f)"></div>
<div class="tb" style="left:124px;width:159px;background:#1d4eb4;padding-left:30px;box-sizing:border-box;box-shadow:inset 1px 1px 2px #12367f">NX 5 - Modeling ...</div>
<div class="tb" style="left:284px;width:158px;padding-left:28px;box-sizing:border-box">moduan</div>
<div class="tb" style="left:444px;width:158px;padding-left:29px;box-sizing:border-box"><b>百度搜索</b>_<b>三维技</b>...</div>
<div class="tb" style="left:604px;width:158px;padding-left:28px;box-sizing:border-box"><b>『</b>Siemens NX <b>技</b>...</div>
<div class="a" style="left:1020px;top:672px;width:185px;height:30px;background:linear-gradient(#2aa6f4 0,#1190e8 15%,#1484e2 80%,#0e64c0);border-left:1px solid #0c3a90;box-sizing:border-box"></div>
<div class="a" style="left:1161px;top:679px;font-size:11px;line-height:15px;color:#dff0ff;letter-spacing:.5px">13:32</div>
<svg class="a" style="left:0;top:672px" width="1205" height="30" fill="none">
<circle cx="41" cy="15" r="6.500" stroke="#7cc0f8" stroke-width="2.500"/><path d="M33 19C40 11 46 7 50 7" stroke="#f0c040" stroke-width="1.500"/>
<rect x="58" y="8" width="12" height="14" rx="3" fill="#dfe8f4" stroke="#3a5e98"/><path d="M61 12H67M61 15H67M61 18H65" stroke="#446"/>
<path d="M82 6H88V19H82Z" fill="#f4dca0"/><circle cx="86" cy="12" r="3" fill="#fff"/><path d="M81 23L87 15L94 23Z" fill="#d8281c"/>
<path d="M108 6L111 9L108 12M112 6L115 9L112 12" stroke="#a8c8f4"/>
<path d="M134 8L143 14L136 23C140 18 149 14 150 9L146 16C144 8 138 7 134 8Z" fill="#3a9ad8"/><path d="M137 5L144 10L146 5Z" fill="#c82828"/><path d="M136 23C142 22 148 16 150 9" stroke="#f0e8c0" stroke-width="1.500"/>
<path d="M293 9H300L302 11H308V22H293Z" fill="#f0d060" stroke="#9a7a20"/><circle cx="301" cy="15" r="4" fill="#e8e8e8"/>
<path d="M455 6H465L468 9V23H455Z" fill="#fff" stroke="#5a7ab0"/><path d="M458 15C460 10 465 10 466 14C464 19 460 18 458 15Z" stroke="#2a5fc8" stroke-width="1.500"/>
<path d="M615 6H625L628 9V23H615Z" fill="#fff" stroke="#5a7ab0"/><path d="M618 15C620 10 625 10 626 14C624 19 620 18 618 15Z" stroke="#2a5fc8" stroke-width="1.500"/>
<rect x="947" y="12" width="15" height="9" fill="#e8e8e8" stroke="#222"/><path d="M949 15H960M949 18H960" stroke="#444" stroke-dasharray="1 1"/><path d="M954 9V12" stroke="#222"/>
<path d="M971 8H984V21H977L975 24V21H971Z" fill="#ffffb8" stroke="#111"/><text x="974.500" y="19" font-size="11" font-weight="bold" fill="#111" font-family="Liberation Sans">?</text>
<rect x="997" y="9" width="6" height="4" stroke="#fff"/><rect x="995" y="11" width="6" height="4" fill="#2559d2" stroke="#fff"/><path d="M996 22H1002L999 25Z" fill="#cfe0fc"/>
<rect x="1032" y="8" width="8" height="9" fill="#2a3e66"/><rect x="1033" y="18" width="6" height="3" fill="#ccd"/><path d="M1041 9A4 4 0 0 1 1041 15M1044 7A7 7 0 0 1 1044 17" stroke="#8cf08c"/>
<rect x="1052" y="6" width="8" height="9" fill="#2a3e66"/><rect x="1048" y="12" width="8" height="9" fill="#3a5080"/><path d="M1055 17L1063 24M1063 17L1055 24" stroke="#e03030" stroke-width="1.800"/>
<rect x="1067" y="9" width="16" height="14" rx="3" fill="#cc2424"/><text x="1068.500" y="20" font-size="9" font-weight="bold" fill="#fff" font-family="Liberation Sans">ATI</text>
<rect x="1086" y="9" width="15" height="13" fill="#60c040" stroke="#dfe"/><path d="M1088 14H1099M1088 18H1099" stroke="#c0f0a0"/>
<circle cx="1109" cy="14" r="6.500" fill="#9aa" stroke="#445"/><circle cx="1109" cy="14" r="2.500" fill="#334"/><path d="M1112 22L1118 15" stroke="#cde"/>
<path d="M1123 9L1129 6L1136 9V16C1135 21 1131 24 1129 25C1126 24 1123 21 1123 16Z" fill="#c82020" stroke="#f0d0d0"/><path d="M1131 10L1126 16H1130L1128 21L1133 14H1129Z" fill="#fff"/>
<path d="M1142 8L1147 6L1152 8V20L1147 24L1142 20Z" fill="#70c840" stroke="#e8f8b0"/><path d="M1147 11V19M1143 15H1151" stroke="#fff" stroke-width="2.500"/>
</svg>

<!-- Watermark -->
<svg class="a" style="left:1058px;top:744px" width="206" height="22">
<text x="2" y="15" font-family="Liberation Sans,Noto Sans CJK SC,sans-serif" font-weight="bold" font-size="14" fill="#fff" stroke="#cc3a3a" stroke-width="1" textLength="200" lengthAdjust="spacingAndGlyphs">三维网www.3dportal.cn</text>
</svg>
</body></html>
